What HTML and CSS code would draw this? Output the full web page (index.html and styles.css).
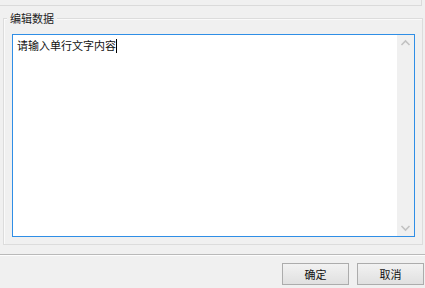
FILE: index.html
```html
<!DOCTYPE html>
<html>
<head>
<meta charset="utf-8">
<link rel="stylesheet" href="styles.css">
</head>
<body>
<div class="window">
  <div class="topstrip"></div>
  <div class="group">
    <div class="legend">编辑数据</div>
    <div class="editor">
      <div class="content">请输入单行文字内容<span class="caret"></span></div>
      <div class="scrollbar">
        <svg class="arrow" width="17" height="17" viewBox="0 0 17 17"><path d="M4.5 10 L8.5 6 L12.5 10" fill="none" stroke="#c2c2c2" stroke-width="1.6"/></svg>
        <svg class="arrow" width="17" height="17" viewBox="0 0 17 17"><path d="M4.5 7 L8.5 11 L12.5 7" fill="none" stroke="#c2c2c2" stroke-width="1.6"/></svg>
      </div>
    </div>
  </div>
  <div class="separator"></div>
  <div class="buttons">
    <button class="btn">确定</button>
    <button class="btn">取消</button>
  </div>
</div>
</body>
</html>
```
FILE: styles.css
```css
html, body {
  margin: 0;
  padding: 0;
  background: #f0f0f0;
}
.window {
  width: 425px;
  height: 288px;
  font-family: "Noto Sans CJK SC", "Microsoft YaHei", sans-serif;
  font-size: 11px;
  color: #1a1a1a;
  display: flex;
  flex-direction: column;
  overflow: hidden;
}
.topstrip {
  height: 5px;
  width: 421px;
  border-right: 1px solid #dadada;
  border-bottom: 1px solid #dadada;
  background: #f0f0f0;
  flex: none;
}
.group {
  position: relative;
  margin: 12px 2px 0 3px;
  border: 1px solid #dcdcdc;
  box-shadow: inset 1px 1px 0 #fafafa;
  padding: 15px 7px 7px 8px;
  box-sizing: border-box;
  height: 227px;
  flex: none;
}
.legend {
  position: absolute;
  left: 3px;
  top: -10px;
  padding: 0 3px;
  background: #f0f0f0;
  line-height: 18px;
  color: #222;
}
.editor {
  height: 100%;
  border: 1px solid #2f8ee6;
  background: #fff;
  box-sizing: border-box;
  display: flex;
}
.content {
  flex: 1;
  padding: 2px 4px;
  line-height: 16px;
  color: #111;
}
.caret {
  display: inline-block;
  width: 1px;
  height: 14px;
  background: #000;
  vertical-align: -3px;
}
.scrollbar {
  width: 17px;
  background: #f0f0f0;
  display: flex;
  flex-direction: column;
  justify-content: space-between;
}
.arrow {
  display: block;
}
.separator {
  margin-top: 9px;
  height: 1px;
  background: #b9b9b9;
  border-bottom: 1px solid #fdfdfd;
  flex: none;
}
.buttons {
  display: flex;
  justify-content: flex-end;
  gap: 8px;
  padding: 7px 1px 0 0;
}
.btn {
  width: 67px;
  height: 22px;
  margin: 0;
  padding: 0;
  border: 1px solid #acacac;
  background: linear-gradient(#f2f2f2, #e0e0e0);
  font-family: "Noto Sans CJK SC", sans-serif;
  font-size: 11px;
  color: #111;
  line-height: 20px;
}
```
